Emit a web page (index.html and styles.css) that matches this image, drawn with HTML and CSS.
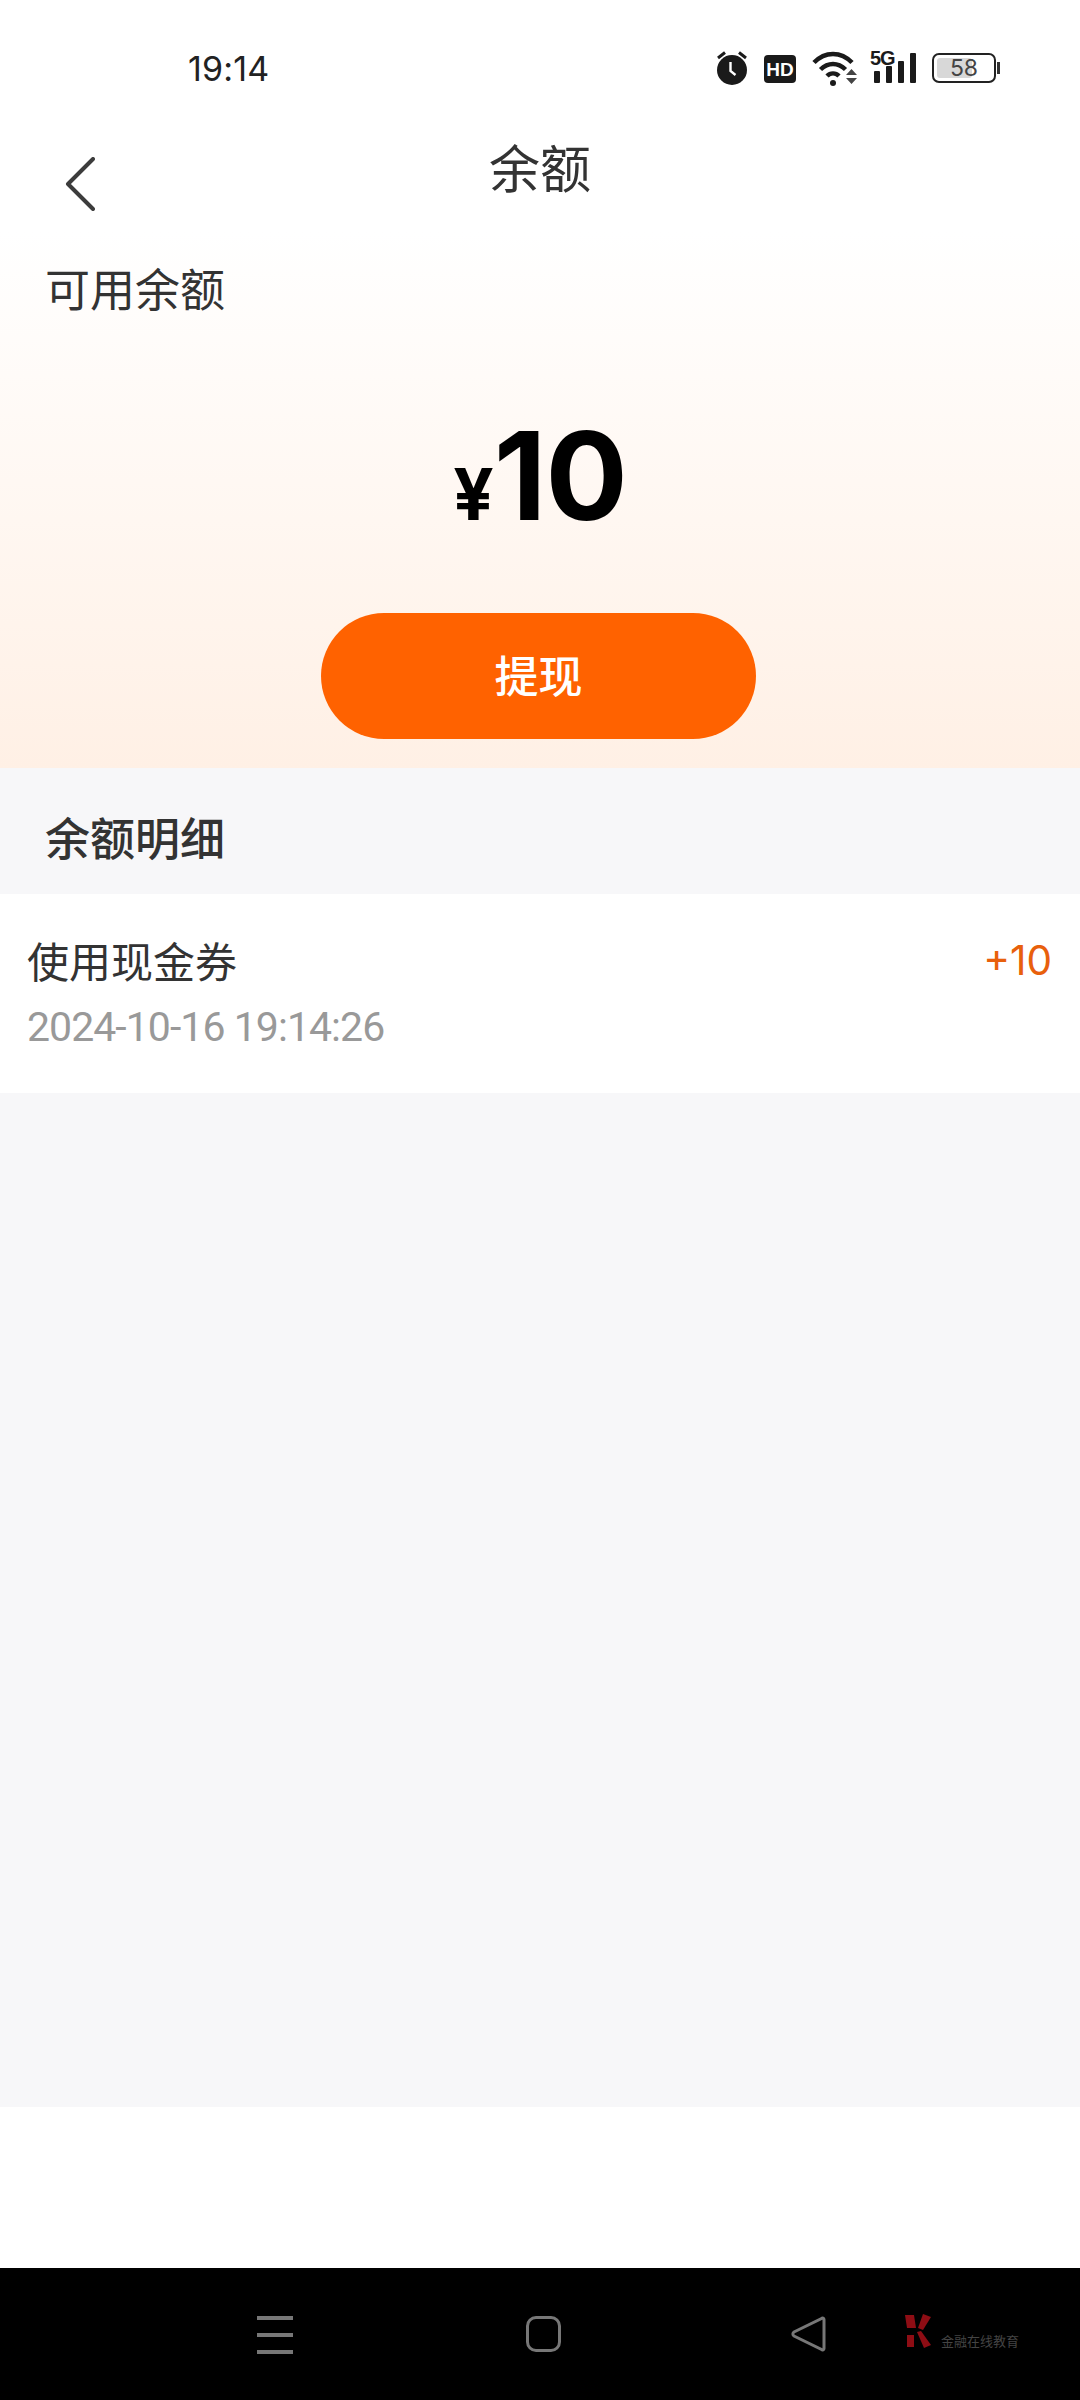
FILE: index.html
```html
<!DOCTYPE html>
<html lang="zh-CN">
<head>
<meta charset="utf-8">
<title>余额</title>
<link rel="stylesheet" href="styles.css">
</head>
<body>
<div class="screen">
  <header class="status">
    <span class="time">19:14</span>
    <div class="status-icons">
      <svg class="ic-alarm" viewBox="0 0 32 36"><circle cx="16" cy="20" r="15" fill="#1a1a1a"/><path d="M2 8 9 2.500M30 8 23 2.500" stroke="#1a1a1a" stroke-width="3" fill="none"/><path d="M14.500 12v9l5 4" stroke="#fff" stroke-width="2.400" fill="none"/></svg>
      <svg class="ic-hd" viewBox="0 0 32 28"><rect width="32" height="28" rx="4" fill="#1a1a1a"/><text x="16" y="21" class="hd-text">HD</text></svg>
      <svg class="ic-wifi" viewBox="0 0 46 36"><path d="M2 12.500C13 1 29 1 40 12.500M8.500 19.500C16 12 26 12 33.500 19.500M15 26C18.500 22.500 23.500 22.500 27 26" stroke="#1a1a1a" stroke-width="4.500" fill="none"/><circle cx="21" cy="33" r="3" fill="#1a1a1a"/><path d="M34 25h11l-5.500-6zM34 28h11l-5.500 6z" fill="#444"/></svg>
      <div class="signal">
        <span class="five-g">5G</span>
        <svg class="ic-bars" viewBox="0 0 44 30"><rect x="1" y="18" width="6" height="12" rx="1"/><rect x="13" y="13" width="6" height="17" rx="1"/><rect x="25" y="8" width="6" height="22" rx="1"/><rect x="37" y="0" width="6" height="30" rx="1"/></svg>
      </div>
      <div class="battery"><div class="battery-body"><div class="battery-fill"></div><span class="battery-num">58</span></div><div class="battery-nub"></div></div>
    </div>
  </header>

  <nav class="topbar">
    <svg class="back" viewBox="0 0 30 54"><path d="M28 2 3 27l25 25" fill="none" stroke="#3c3c3c" stroke-width="4" stroke-linecap="round" stroke-linejoin="round"/></svg>
    <h1 class="title">余额</h1>
  </nav>

  <section class="hero">
    <div class="hero-label">可用余额</div>
    <div class="amount"><span class="yen">¥</span><span class="value">10</span></div>
    <button class="withdraw">提现</button>
  </section>

  <h2 class="detail-head">余额明细</h2>

  <div class="row">
    <div class="row-main">
      <div class="row-name">使用现金券</div>
      <div class="row-date">2024-10-16 19:14:26</div>
    </div>
    <div class="row-amount">+10</div>
  </div>

  <div class="fill"></div>
  <div class="strip"></div>

  <footer class="sysnav">
    <div class="menu-ic"><span></span><span></span><span></span></div>
    <div class="home-ic"></div>
    <svg class="back-ic" viewBox="0 0 36 36"><path d="M33 3.500v29c0 1.500-1.500 2-2.500 1L3 20c-1.500-1-1.500-3 0-4L30.500 2.500c1-1 2.500-.5 2.500 1z" fill="none" stroke="#777" stroke-width="3"/></svg>
    <div class="mark">
      <svg class="mark-logo" viewBox="0 0 30 34"><path d="M1 1h9l2 13H3z" fill="#8e0d14"/><path d="M19 0l8 3-8 13-5-2z" fill="#8e0d14"/><path d="M3 21h7v12H3z" fill="#8e0d14"/><path d="M13 18l4-1 10 14-7 3z" fill="#8e0d14"/></svg>
      <span class="mark-text">金融在线教育</span>
    </div>
  </footer>
</div>
</body>
</html>
```

FILE: styles.css
```css
* { box-sizing: border-box; margin: 0; padding: 0; }
html, body { background: #fff; }
body { font-family: "Noto Sans CJK SC", "Noto Sans", sans-serif; width: 1080px; }
.screen { width: 1080px; height: 2400px; display: flex; flex-direction: column; background: #fff; overflow: hidden; }

.status { height: 100px; flex: none; display: flex; justify-content: space-between; align-items: flex-start; padding: 49px 80px 0 188px; }
.time { font-family: Inter, Roboto, sans-serif; font-size: 34px; line-height: 40px; color: #222; letter-spacing: 0.2px; }
.status-icons { display: flex; align-items: flex-start; padding-top: 1px; }
.ic-alarm { width: 32px; height: 36px; margin-right: 16px; }
.ic-hd { width: 32px; height: 28px; margin: 5px 16px 0 0; }
.hd-text { font-family: "Liberation Sans", sans-serif; font-weight: 700; font-size: 19px; fill: #fff; text-anchor: middle; }
.ic-wifi { width: 46px; height: 36px; margin-right: 12px; }
.signal { position: relative; width: 46px; height: 36px; margin-right: 16px; }
.five-g { position: absolute; left: 0; top: -2px; font-family: "Liberation Sans", sans-serif; font-weight: 700; font-size: 20px; line-height: 20px; color: #1a1a1a; letter-spacing: -1px; }
.ic-bars { position: absolute; left: 3px; bottom: 3px; width: 44px; height: 30px; fill: #1a1a1a; }
.battery { display: flex; align-items: center; height: 30px; margin-top: 3px; }
.battery-body { position: relative; width: 64px; height: 30px; border: 2.500px solid #222; border-radius: 7px; display: flex; align-items: center; justify-content: center; }
.battery-fill { position: absolute; left: 3px; top: 3px; bottom: 3px; width: 58%; background: #d8d8d8; border-radius: 3px; }
.battery-num { position: relative; font-family: Inter, Roboto, sans-serif; font-size: 23px; line-height: 25px; color: #444; }
.battery-nub { width: 3px; height: 12px; margin-left: 1px; background: #333; }

.topbar { height: 132px; flex: none; display: grid; grid-template-columns: 1fr auto 1fr; padding: 0 65px; }
.back { width: 30px; height: 54px; margin-top: 57px; }
.title { grid-column: 2; font-size: 51px; line-height: 51px; font-weight: 400; color: #333; padding-top: 41px; }

.hero { height: 536px; flex: none; display: flex; flex-direction: column; align-items: center; background: linear-gradient(#ffffff, #fff0e5); }
.hero-label { align-self: flex-start; padding: 33px 0 0 45px; font-size: 45px; line-height: 46px; color: #333; }
.amount { display: flex; align-items: baseline; margin-top: 100px; height: 130px; color: #000; font-family: Inter, Roboto, sans-serif; font-weight: 700; line-height: 130px; }
.yen { font-size: 71px; }
.value { font-size: 122px; letter-spacing: -1px; }
.withdraw { width: 435px; height: 126px; margin: 72px 3px 0 0; padding-bottom: 4px; border: 0; border-radius: 63px; background: #ff6200; color: #fff; font-family: inherit; font-size: 44px; font-weight: 500; }

.detail-head { height: 126px; flex: none; background: #f7f7f9; padding: 46px 0 0 45px; font-size: 45px; line-height: 46px; font-weight: 500; color: #333; }

.row { height: 199px; flex: none; display: flex; justify-content: space-between; padding: 43px 28px 0 27px; background: #fff; }
.row-name { font-size: 42px; line-height: 46px; color: #333; }
.row-date { margin-top: 19px; font-family: Roboto, Inter, sans-serif; font-size: 41px; line-height: 50px; color: #999; letter-spacing: -0.95px; }
.row-amount { font-family: Inter, Roboto, sans-serif; font-size: 40.5px; line-height: 48px; color: #e8600c; }

.fill { flex: 1; background: #f7f7f9; }
.strip { height: 161px; flex: none; background: #fff; }

.sysnav { height: 132px; flex: none; display: flex; align-items: flex-start; background: #000; padding: 48px 0 0 257px; }
.menu-ic { width: 36px; height: 38px; display: flex; flex-direction: column; justify-content: space-between; }
.menu-ic span { height: 4px; background: #777; }
.home-ic { width: 35px; height: 36px; margin-left: 233px; border: 3px solid #777; border-radius: 10px; }
.back-ic { width: 36px; height: 36px; margin-left: 230px; }
.mark { display: flex; align-items: flex-end; margin: -2px 0 0 77px; }
.mark-logo { width: 30px; height: 34px; }
.mark-text { margin-left: 7px; font-size: 13px; line-height: 14px; color: #444; white-space: nowrap; }
```
